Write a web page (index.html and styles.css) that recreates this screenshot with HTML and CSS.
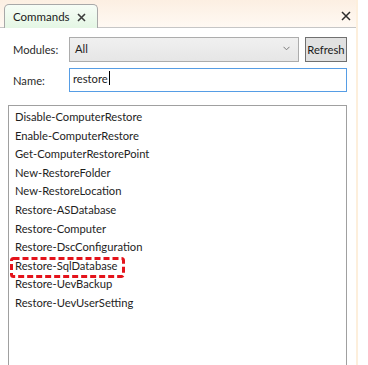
FILE: index.html
```html
<!DOCTYPE html>
<html lang="en">

<head>
    <meta charset="UTF-8">
    <title>Commands</title>
    <link rel="stylesheet" href="styles.css">
</head>

<body>
    <div class="panel">
        <!-- Tab strip -->
        <div class="tabbar">
            <div class="tab">
                <span>Commands</span>
                <svg class="tab-close" width="9" height="9" viewBox="0 0 9 9">
                    <path d="M1 1 L8 8 M8 1 L1 8" stroke="#3c3c3c" stroke-width="1.6" />
                </svg>
            </div>
            <svg class="close" width="10" height="10" viewBox="0 0 10 10">
                <path d="M1 1 L9 9 M9 1 L1 9" stroke="#2b2b2b" stroke-width="1.5" />
            </svg>
        </div>

        <div class="content">
            <div class="row">
                <label>Modules:</label>
                <div class="select">
                    <span>All</span>
                    <svg width="7" height="5" viewBox="0 0 7 5">
                        <path d="M0.5 0.8 L3.5 3.8 L6.5 0.8" fill="none" stroke="#7a7a7a" stroke-width="1" />
                    </svg>
                </div>
                <button class="refresh">Refresh</button>
            </div>

            <div class="row name-row">
                <label>Name:</label>
                <div class="input">restore<span class="caret"></span></div>
            </div>

            <ul class="list">
                <li>Disable-ComputerRestore</li>
                <li>Enable-ComputerRestore</li>
                <li>Get-ComputerRestorePoint</li>
                <li>New-RestoreFolder</li>
                <li>New-RestoreLocation</li>
                <li>Restore-ASDatabase</li>
                <li>Restore-Computer</li>
                <li>Restore-DscConfiguration</li>
                <li>Restore-SqlDatabase
                    <svg class="mark" width="115" height="21" viewBox="0 0 115 21">
                        <rect x="1.5" y="1.5" width="112" height="18" rx="2" fill="none" stroke="#e4131b" stroke-width="3" stroke-dasharray="6 3" />
                    </svg>
                </li>
                <li>Restore-UevBackup</li>
                <li>Restore-UevUserSetting</li>
            </ul>
        </div>
    </div>
</body>

</html>
```

FILE: styles.css
```css
body {
    margin: 0;
    background: #fff;
    font-family: Lato, 'Noto Sans', sans-serif;
    font-size: 11.2px;
    color: #1e1e1e;
}

.panel {
    width: 356px;
    height: 365px;
    border-right: 2px solid #fdefdc;
    overflow: hidden;
}

.tabbar {
    height: 27px;
    display: flex;
    align-items: flex-end;
    justify-content: space-between;
    background: linear-gradient(to bottom, #fcefe2, #fff9f3);
    border-bottom: 1px solid #c6c6c6;
}

.tab {
    display: flex;
    align-items: center;
    justify-content: space-between;
    box-sizing: border-box;
    margin-left: 4px;
    margin-bottom: -1px;
    height: 24px;
    width: 94px;
    padding: 0 11px 0 8px;
    border: 1px solid #a8a8a8;
    border-bottom: none;
    border-radius: 5px 5px 0 0;
    background: linear-gradient(to bottom, #f6fdf6, #e4f6e4);
    color: #1a1a1a;
    font-size: 11.5px;
}

.tab-close {
    margin-top: 1px;
}

.close {
    align-self: center;
    margin-right: 5px;
    margin-top: 4px;
}

.content {
    padding: 9px 9px 0 8px;
}

.row {
    display: flex;
    align-items: center;
    height: 25px;
    padding-left: 5px;
}

.row label {
    width: 56px;
    color: #2a2a2a;
}

.select {
    display: flex;
    align-items: center;
    justify-content: space-between;
    box-sizing: border-box;
    width: 230px;
    height: 25px;
    padding: 0 8px 0 5px;
    border: 1px solid #acacac;
    background: linear-gradient(to bottom, #f0f0f0, #e6e6e6);
}

.select span {
    margin-top: -3px;
}

.select svg {
    margin-top: -3px;
}

.refresh {
    box-sizing: border-box;
    width: 42px;
    height: 25px;
    margin-left: 6px;
    padding: 0;
    border: 1px solid #707070;
    background: #e1e1e1;
    font: inherit;
    color: #1a1a1a;
}

.name-row {
    margin-top: 6px;
    height: 24px;
}

.input {
    display: flex;
    align-items: center;
    box-sizing: border-box;
    width: 278px;
    height: 24px;
    padding: 0 0 4px 3px;
    border: 1px solid #569de5;
    background: #fff;
}

.caret {
    width: 1px;
    height: 14px;
    margin-left: 1px;
    background: #000;
}

.list {
    list-style: none;
    margin: 13px 0 0;
    padding: 2px 0 0;
    height: 300px;
    border: 1px solid #a0a0a0;
}

.list li {
    position: relative;
    height: 18.6px;
    line-height: 18.6px;
    padding-left: 6px;
}

.mark {
    position: absolute;
    left: 1px;
    top: 0;
}
```
